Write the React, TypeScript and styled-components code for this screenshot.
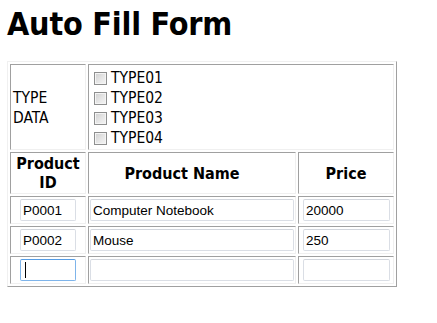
import styled, { createGlobalStyle } from "styled-components";

const GlobalStyle = createGlobalStyle`
  html, body {
    margin: 0;
    background: #fff;
  }
  body {
    padding: 8px 7px;
    font-family: "DejaVu Sans Condensed", "DejaVu Sans", Tahoma, sans-serif;
    color: #000;
  }
`;

const Title = styled.h1`
  margin: 0 0 21px 0;
  font-size: 32px;
  line-height: 32px;
  font-weight: bold;
  letter-spacing: -0.2px;
`;

const Grid = styled.table`
  width: 390px;
  table-layout: fixed;
  border-collapse: separate;
  border-spacing: 2px;
  border: 1px solid;
  border-color: #f0f0f0 #a0a0a0 #a0a0a0 #f0f0f0;
`;

const Cell = styled.td`
  padding: 1px;
  border: 1px solid;
  border-color: #a0a0a0 #f0f0f0 #f0f0f0 #a0a0a0;
  font-size: 15.5px;
  text-align: left;
  vertical-align: middle;
`;

const Head = styled.th<{ $shift?: number }>`
  padding: 1px ${(p) => 1 + (p.$shift ?? 0)}px 1px 1px;
  height: 38px;
  border: 1px solid;
  border-color: #a0a0a0 #f0f0f0 #f0f0f0 #a0a0a0;
  font-size: 16px;
  line-height: 19px;
  font-weight: bold;
  text-align: center;
  vertical-align: middle;
`;

const TypeLabel = styled.div`
  line-height: 20px;
  padding: 2px 0 0 1px;
`;

const CheckList = styled.div`
  padding: 2px 0 0 0;
`;

const CheckRow = styled.label`
  display: flex;
  align-items: center;
  height: 20px;
  padding-left: 4px;
  gap: 4px;
  font-size: 15.5px;
`;

const Box = styled.input`
  appearance: none;
  margin: 0;
  width: 13px;
  height: 13px;
  border: 1px solid #8e8f8f;
  box-shadow: inset 0 0 0 1px #f4f4f4;
  background: linear-gradient(135deg, #cfcfcf 0%, #e6e6e6 55%, #f4f4f4 100%);
`;

const Field = styled.input<{ $w?: number; $ml?: number; $focus?: boolean }>`
  display: block;
  box-sizing: border-box;
  width: ${(p) => (p.$w ? `${p.$w}px` : "100%")};
  height: 22px;
  margin: 1px 0 1px ${(p) => p.$ml ?? 0}px;
  padding: 0 2px;
  border: 1px solid ${(p) => (p.$focus ? "#7eb4ea" : "#dadee5")};
  border-top-color: ${(p) => (p.$focus ? "#569de5" : "#d2d6dd")};
  border-radius: 2px;
  font-family: "Liberation Sans", Arial, sans-serif;
  font-size: 13.5px;
  color: #000;
  background: #fff;
  outline: none;
`;

const FieldWrap = styled.div<{ $center?: boolean }>`
  position: relative;
  display: flex;
  justify-content: ${(p) => (p.$center ? "center" : "flex-start")};
`;

const Caret = styled.span`
  position: absolute;
  left: 13px;
  top: 4px;
  width: 1px;
  height: 16px;
  background: #000;
`;

const types = ["TYPE01", "TYPE02", "TYPE03", "TYPE04"];

const rows = [
  { id: "P0001", name: "Computer Notebook", price: "20000" },
  { id: "P0002", name: "Mouse", price: "250" },
  { id: "", name: "", price: "" },
];

export default function App() {
  return (
    <>
      <GlobalStyle />
      <Title>Auto Fill Form</Title>
      <Grid>
        <colgroup>
          <col style={{ width: 76 }} />
          <col style={{ width: 208 }} />
          <col style={{ width: 96 }} />
        </colgroup>
        <tbody>
          <tr>
            <Cell>
              <TypeLabel>
                TYPE
                <br />
                DATA
              </TypeLabel>
            </Cell>
            <Cell colSpan={2}>
              <CheckList>
                {types.map((t) => (
                  <CheckRow key={t}>
                    <Box type="checkbox" />
                    {t}
                  </CheckRow>
                ))}
              </CheckList>
            </Cell>
          </tr>
          <tr>
            <Head>
              Product
              <br />
              ID
            </Head>
            <Head $shift={20}>Product Name</Head>
            <Head>Price</Head>
          </tr>
          {rows.map((r, i) => {
            const last = i === rows.length - 1;
            return (
              <tr key={i}>
                <Cell>
                  <FieldWrap $center>
                    <Field $w={56} defaultValue={r.id} $focus={last} />
                    {last && <Caret />}
                  </FieldWrap>
                </Cell>
                <Cell>
                  <Field defaultValue={r.name} />
                </Cell>
                <Cell>
                  <Field $w={87} $ml={3} defaultValue={r.price} />
                </Cell>
              </tr>
            );
          })}
        </tbody>
      </Grid>
    </>
  );
}
